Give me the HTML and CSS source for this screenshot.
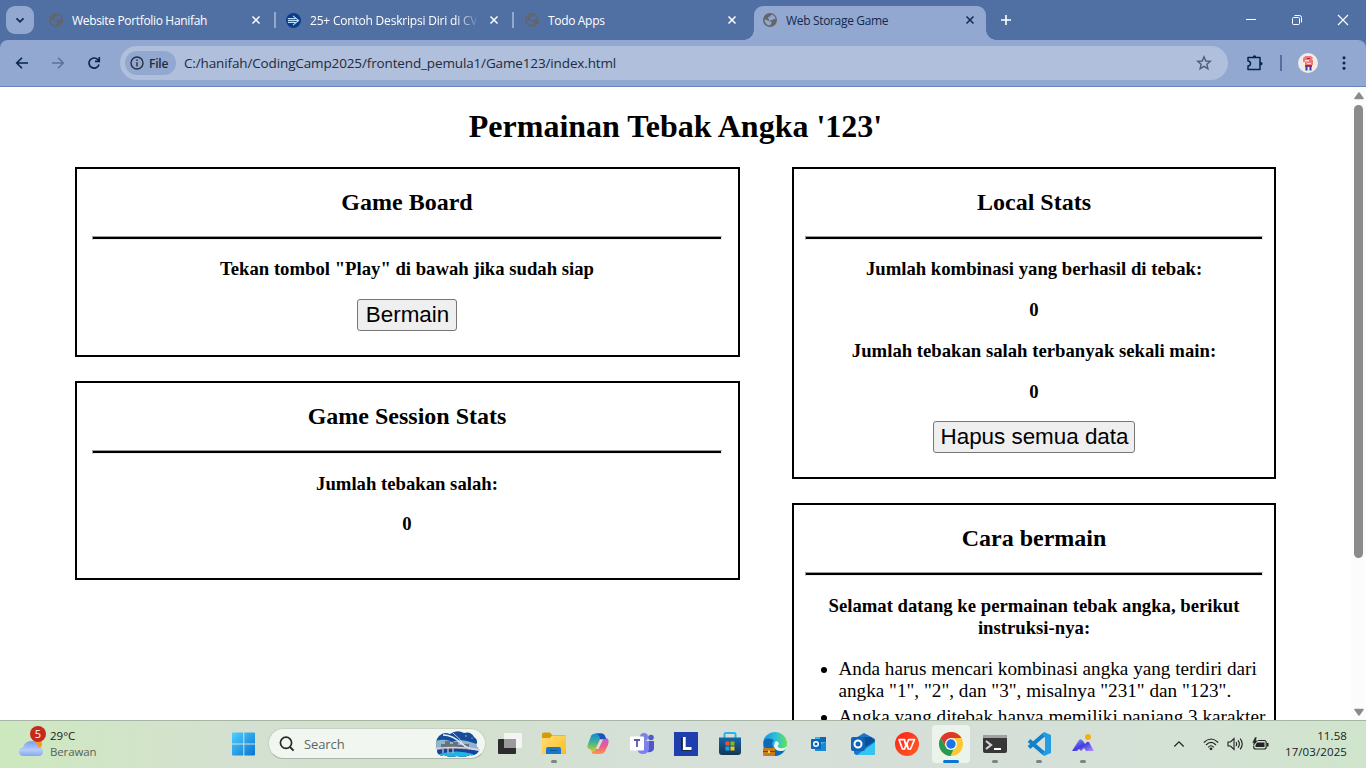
FILE: index.html
```html
<!DOCTYPE html>
<html lang="id">
<head>
<meta charset="utf-8">
<title>Web Storage Game</title>
<link rel="stylesheet" href="styles.css">
</head>
<body>
<svg class="defs" width="0" height="0">
  <defs>
    <symbol id="globe" viewBox="0 0 16 16"><circle cx="8" cy="8" r="8" fill="#626569"/><path d="M9.200 1.800 C12 2 14.300 4.500 14.300 7.400 L12 6.500 L11 8.400 L9.300 7.600 L8.200 9 L6.500 8.400 L7 6.800 L5.200 6.400 L6.600 4.300 L8.600 4 Z M1.700 7.200 L5 8.200 L8 9.800 L10.200 10.100 L9.200 12.200 L8 14.300 C4.600 14.300 1.800 11.400 1.700 7.200 Z" fill="currentColor"/></symbol>
    <symbol id="close" viewBox="0 0 10 10"><path d="M1.500 1.500 L8.500 8.500 M8.500 1.500 L1.500 8.500" stroke="currentColor" stroke-width="1.500"/></symbol>
    <linearGradient id="sky" x1="0" y1="0" x2="1" y2="1"><stop offset="0" stop-color="#50d0ff"/><stop offset="1" stop-color="#0873d2"/></linearGradient>
    <linearGradient id="cloudFill" x1="0" y1="0" x2="0" y2="1"><stop offset="0" stop-color="#7d9cf0"/><stop offset=".6" stop-color="#b4cdfb"/><stop offset="1" stop-color="#83a8ed"/></linearGradient>
    <linearGradient id="folderFill" x1="0" y1="0" x2="1" y2="1"><stop offset="0" stop-color="#ffdf76"/><stop offset="1" stop-color="#fdbb20"/></linearGradient>
    <linearGradient id="copA" x1="0" y1="0" x2="0" y2="1"><stop offset="0" stop-color="#1687dc"/><stop offset=".5" stop-color="#43b78c"/><stop offset="1" stop-color="#f2ca20"/></linearGradient>
    <linearGradient id="copB" x1="0" y1="0" x2="0" y2="1"><stop offset="0" stop-color="#ae61e6"/><stop offset=".5" stop-color="#ef5a8e"/><stop offset="1" stop-color="#ff944a"/></linearGradient>
    <linearGradient id="storeFill" x1="0" y1="0" x2="0" y2="1"><stop offset="0" stop-color="#1768a9"/><stop offset="1" stop-color="#153452"/></linearGradient>
    <linearGradient id="edgeA" x1="0" y1="0" x2="1" y2="0"><stop offset="0" stop-color="#168fda"/><stop offset=".5" stop-color="#29bddc"/><stop offset="1" stop-color="#60e455"/></linearGradient>
    <linearGradient id="wpsFill" x1="0" y1="0" x2="1" y2="1"><stop offset="0" stop-color="#ff1d16"/><stop offset="1" stop-color="#ff6125"/></linearGradient>
    <linearGradient id="codeFill" x1="0" y1="0" x2="1" y2="0"><stop offset="0" stop-color="#086eb5"/><stop offset="1" stop-color="#2ba9ed"/></linearGradient>
    <linearGradient id="peakFill" x1="0" y1="0" x2="1" y2="1"><stop offset="0" stop-color="#9ba4f9"/><stop offset=".5" stop-color="#433be0"/><stop offset="1" stop-color="#b497f8"/></linearGradient>
    <clipPath id="sceneClip"><path d="M4 5 Q9 0 15 3 Q22 -2 29 2 Q36 0 39 6 Q44 9 41 14 L44 19 Q42 25 35 24 Q29 27 22 25 Q14 27 9 24 Q2 26 2 18 Q-1 10 4 5 Z"/></clipPath>
  </defs>
</svg>

<header class="tabstrip">
  <div class="tab-search"><svg width="12" height="12" viewBox="0 0 12 12"><path d="M2.500 4.300 L6 7.800 L9.500 4.300" fill="none" stroke="#13294b" stroke-width="1.800"/></svg></div>
  <nav class="tabs">
    <div class="tab divided"><svg class="favicon"><use href="#globe"/></svg><span class="tab-title">Website Portfolio Hanifah</span><svg class="tab-close"><use href="#close"/></svg></div>
    <div class="tab divided"><svg class="favicon wide" viewBox="0 0 16 16"><circle cx="8" cy="8" r="8" fill="#0b3b8c"/><path d="M2 6 H10 M2 8 H13 M2 10 H10 M7.500 3 L13.500 8 L7.500 13" fill="none" stroke="#b8ddff" stroke-width="1.100"/></svg><span class="tab-title faded">25+ Contoh Deskripsi Diri di CV</span><svg class="tab-close"><use href="#close"/></svg></div>
    <div class="tab"><svg class="favicon"><use href="#globe"/></svg><span class="tab-title">Todo Apps</span><svg class="tab-close"><use href="#close"/></svg></div>
    <div class="tab active"><svg class="favicon"><use href="#globe"/></svg><span class="tab-title">Web Storage Game</span><svg class="tab-close"><use href="#close"/></svg></div>
  </nav>
  <svg class="new-tab" width="12" height="12" viewBox="0 0 12 12"><path d="M6 1 V11 M1 6 H11" stroke="#fff" stroke-width="1.600"/></svg>
  <div class="window-controls">
    <svg width="12" height="12" viewBox="0 0 12 12"><path d="M1 5.500 H11" stroke="#fff"/></svg>
    <svg width="12" height="12" viewBox="0 0 12 12"><rect x="1.500" y="3.500" width="7" height="7" rx="1" fill="none" stroke="#fff"/><path d="M3.500 1.500 H8.500 Q10.500 1.500 10.500 3.500 V8.500" fill="none" stroke="#fff"/></svg>
    <svg width="12" height="12" viewBox="0 0 12 12"><path d="M1 1 L11 11 M11 1 L1 11" stroke="#fff" stroke-width="1.100"/></svg>
  </div>
</header>

<div class="toolbar-wrap">
<div class="toolbar">
  <div class="nav-buttons">
    <svg width="14" height="14" viewBox="0 0 14 14"><path d="M13 7 H2 M7 1.700 L1.700 7 L7 12.300" fill="none" stroke="#05244f" stroke-width="1.600"/></svg>
    <svg width="14" height="14" viewBox="0 0 14 14"><path d="M1 7 H12 M7 1.700 L12.300 7 L7 12.300" fill="none" stroke="#5872a0" stroke-width="1.500"/></svg>
    <svg width="14" height="14" viewBox="0 0 14 14"><path d="M12 8.500 A5.100 5.100 0 1 1 10.800 3.500 L12.300 5 M12.300 1 V5.400 H8" fill="none" stroke="#05244f" stroke-width="1.600"/></svg>
  </div>
  <div class="omnibox">
    <div class="chip"><svg width="14" height="14" viewBox="0 0 14 14"><circle cx="7" cy="7" r="6" fill="none" stroke="#27303e" stroke-width="1.400"/><path d="M7 6.200 V10.400 M7 3.500 V5" stroke="#27303e" stroke-width="1.400"/></svg><span>File</span></div>
    <span class="url">C:/hanifah/CodingCamp2025/frontend_pemula1/Game123/index.html</span>
    <svg class="star" width="16" height="16" viewBox="0 0 16 16"><path d="M8 1.800 L9.800 6 L14.300 6.400 L10.900 9.300 L11.900 13.700 L8 11.400 L4.100 13.700 L5.100 9.300 L1.700 6.400 L6.200 6 Z" fill="none" stroke="#515e74" stroke-width="1.400"/></svg>
  </div>
  <svg class="puzzle" width="18" height="18" viewBox="0 0 18 18"><path d="M2 3.500 H14 V15.500 H2 V12 Q4.500 11.800 4.500 9.500 Q4.500 7.300 2 7 Z" fill="none" stroke="#05244f" stroke-width="1.500" stroke-linejoin="round"/><path d="M6.800 3.500 Q6.800 1.300 8.500 1.300 Q10.200 1.300 10.200 3.500 Z M14 7.800 Q16.600 7.800 16.600 9.600 Q16.600 11.500 14 11.500 Z" fill="#05244f"/></svg>
  <span class="toolbar-divider"></span>
  <svg class="avatar" width="20" height="20" viewBox="0 0 20 20"><circle cx="10" cy="10" r="10" fill="#f0ede5"/><path d="M7.500 3 H13 L15 5 L14 7 H15 V12 H7 V9 H5 V5 Z" fill="#f0787c"/><path d="M9 5 H12 V6 H9 Z" fill="#a0264c"/><path d="M7 7 H11 V8.500 H7 Z M9 10 H13 V11 H9 Z" fill="#fbd9d4"/><path d="M7 12 H14 V14 H7 Z" fill="#b6283b"/><path d="M7.500 13.500 H9.500 V17.500 H7.500 Z M11.500 13.500 H13.500 V17.500 H11.500 Z" fill="#2347b8"/></svg>
  <svg class="more" width="4" height="14" viewBox="0 0 4 14"><g fill="#05244f"><circle cx="2" cy="1.700" r="1.500"/><circle cx="2" cy="7" r="1.500"/><circle cx="2" cy="12.300" r="1.500"/></g></svg>
</div>
</div>

<div class="viewport">
  <main class="page">
    <h1>Permainan Tebak Angka '123'</h1>
    <div class="columns">
      <div class="column main-column">
        <section class="card board">
          <h2>Game Board</h2>
          <hr>
          <h3>Tekan tombol "Play" di bawah jika sudah siap</h3>
          <button class="play">Bermain</button>
        </section>
        <section class="card session">
          <h2>Game Session Stats</h2>
          <hr>
          <h3>Jumlah tebakan salah:</h3>
          <h3>0</h3>
        </section>
      </div>
      <div class="column side-column">
        <section class="card local">
          <h2>Local Stats</h2>
          <hr>
          <h3>Jumlah kombinasi yang berhasil di tebak:</h3>
          <h3>0</h3>
          <h3>Jumlah tebakan salah terbanyak sekali main:</h3>
          <h3>0</h3>
          <button class="clear">Hapus semua data</button>
        </section>
        <section class="card guide">
          <h2>Cara bermain</h2>
          <hr>
          <h3>Selamat datang ke permainan tebak angka, berikut instruksi-nya:</h3>
          <ul>
            <li>Anda harus mencari kombinasi angka yang terdiri dari angka "1", "2", dan "3", misalnya "231" dan "123".</li>
            <li>Angka yang ditebak hanya memiliki panjang 3 karakter</li>
          </ul>
        </section>
      </div>
    </div>
  </main>
  <div class="scrollbar">
    <svg width="10" height="8" viewBox="0 0 10 8"><path d="M5 1 L9 6.500 H1 Z" fill="#8b8b8b" stroke="#8b8b8b" stroke-width="1.500" stroke-linejoin="round"/></svg>
    <div class="thumb"></div>
    <svg class="down" width="10" height="8" viewBox="0 0 10 8"><path d="M5 7 L9 1.500 H1 Z" fill="#8b8b8b" stroke="#8b8b8b" stroke-width="1.500" stroke-linejoin="round"/></svg>
  </div>
</div>

<footer class="taskbar">
  <div class="weather">
    <div class="weather-icon">
      <svg width="26" height="18" viewBox="0 0 26 18"><circle cx="19" cy="5" r="5" fill="#f49a24"/><path d="M6 17 Q1 17 1 12.500 Q1 9 5 8.500 Q7 2 13 2 Q19 2 20 8 Q25 8.500 25 12.500 Q25 17 20 17 Z" fill="url(#cloudFill)"/></svg>
      <span class="badge">5</span>
    </div>
    <div class="weather-text"><span class="temp">29°C</span><span class="cond">Berawan</span></div>
  </div>
  <svg class="start" width="24" height="24" viewBox="0 0 24 24"><path d="M0 1.500 Q0 .5 1 .5 H11.300 V11.400 H0 Z M12.300 .5 H22 Q23 .5 23 1.500 V11.400 H12.300 Z M0 12.400 H11.300 V23.500 H1 Q0 23.500 0 22.500 Z M12.300 12.400 H23 V22.500 Q23 23.500 22 23.500 H12.300 Z" fill="url(#sky)"/></svg>
  <div class="search">
    <svg width="16" height="16" viewBox="0 0 16 16"><circle cx="7" cy="6.800" r="5.600" fill="none" stroke="#292929" stroke-width="1.700"/><path d="M11 11 L14.600 14.700" stroke="#292929" stroke-width="1.900"/></svg>
    <span>Search</span>
    <svg class="scene" width="46" height="26" viewBox="0 0 46 26"><g clip-path="url(#sceneClip)"><rect width="46" height="26" fill="#164b99"/><path d="M0 10 Q11 7 17 11 Q27 6 46 15 V26 H0 Z" fill="#8fb6cf"/><path d="M6 18 V13 H10 V10 H15 V13 H18 V11 H23 V14 H27 V13 H34 V18 Z" fill="#66737c"/><path d="M0 19 Q22 16 46 20 V26 H0 Z" fill="#12439e"/><path d="M4 23 Q22 18 38 23 V26 H4 Z" fill="#20b5e5"/><g fill="#cfe4ff"><circle cx="10" cy="4" r=".7"/><circle cx="31" cy="5" r=".7"/><circle cx="37" cy="7" r=".6"/></g></g><path d="M8 18 V22 M13 17 V22 M18 17 V22" stroke="#b9aeb0" stroke-width="1.500"/><path d="M8 4 Q18 4 27 13 Q33 18 45 19" fill="none" stroke="#e4ecfb" stroke-width="1.500"/><path d="M18 2 Q26 8 30 16" fill="none" stroke="#e4ecfb" stroke-width=".8"/><path d="M0 17.500 Q25 15 45 19" fill="none" stroke="#dfd0dc" stroke-width="1.400"/></svg>
  </div>
  <div class="apps">
    <div class="app"><svg viewBox="0 0 24 24"><rect x="6" y="1" width="18" height="15" rx="1" fill="#f4f4f4"/><rect y="7" width="18" height="15" rx="1" fill="#2c2c2c"/><path d="M6 7 H18 V16 H6 Z" fill="#9b9b9b"/></svg></div>
    <div class="app running"><svg viewBox="0 0 24 24"><path d="M0 2 Q0 .5 2 .5 H8 L10 3 H22 Q24 3 24 5 V10 H0 Z" fill="#d99a08"/><path d="M0 6 H8 L10 3.500 H24 V22 H0 Z" fill="url(#folderFill)"/><path d="M4 22 V17 Q4 15 6 15 H17 Q19 15 19 17 V22 Z" fill="#1478cc"/><path d="M8 18.500 H15" stroke="#0c559c"/></svg></div>
    <div class="app"><svg viewBox="0 0 24 24"><path d="M10 1.500 H16 Q18 1.500 19 4 L20 7 H16 Q14 7 13 10 L10 19 Q9 22 6 20 L4 17 Q0 17 2 12 L5 4 Q6 1.500 10 1.500 Z" fill="url(#copA)"/><path d="M14 22 H8 Q6 22 5.500 20 Q9 20 10 17 L13 8 Q14 5 17 6 H20 Q24 7 22 13 L19 19 Q18 22 14 22 Z" fill="url(#copB)"/><path d="M14 7.500 H17 L12.500 17 H9.500 Z" fill="#d6e0d3"/><path d="M10 1.500 H16 Q18 1.500 19 4 L20 7 H14 Q14 3 10 1.500 Z" fill="#1755bc"/></svg></div>
    <div class="app"><svg viewBox="0 0 24 24"><circle cx="14" cy="5" r="4" fill="#7b83eb"/><circle cx="21" cy="5.500" r="2.800" fill="#5059c9"/><path d="M17 9 H24 V17 Q22 21 17 20 Z" fill="#4e56c9"/><path d="M7 9 H19 V17 Q18 22 13 22 Q8 22 7 17 Z" fill="#7b83eb"/><rect y="4.500" width="14" height="14" rx="1" fill="#fff"/><path d="M4 8 H10 M7 8 V15" stroke="#5558af" stroke-width="1.800"/></svg></div>
    <div class="app"><svg viewBox="0 0 24 24"><path d="M0 0 H24 V24 H0 Z" fill="#1e3fad"/><path d="M8 19 L10.500 17 H18 L17 19 Z M7 6 L9.500 5 V17 L7 19 Z" fill="#12263c"/><path d="M10.300 5 V16.500 H17.500" fill="none" stroke="#fff" stroke-width="2.800"/></svg></div>
    <div class="app"><svg viewBox="0 0 24 24"><path d="M6.500 6 V2 Q6.500 1 8 1 H16 Q17.500 1 17.500 2 V6" fill="none" stroke="#27b7ef" stroke-width="2"/><path d="M1 5.500 H23 V20 Q23 23 20 23 H4 Q1 23 1 20 Z" fill="url(#storeFill)"/><path d="M7.500 9.500 H11.500 V13.500 H7.500 Z" fill="#ee5425"/><path d="M12.500 9.500 H16.500 V13.500 H12.500 Z" fill="#82bd20"/><path d="M7.500 14.500 H11.500 V18.500 H7.500 Z" fill="#15a4ec"/><path d="M12.500 14.500 H16.500 V18.500 H12.500 Z" fill="#ffc117"/></svg></div>
    <div class="app"><svg viewBox="0 0 24 24"><circle cx="12" cy="12" r="12" fill="url(#edgeA)"/><path d="M1 8 Q5 5 11 8 Q8 11 10 15 Q13 20 22 18 Q18 24 11 24 Q0 22 1 8 Z" fill="#0e67b7"/><path d="M12 10 Q15 8 16 12 Q13 15 17 16 Q21 17 24 14 Q23 19 18 19 Q12 19 11 14 Z" fill="#eaf4ee"/><rect y="16" width="12" height="8" rx="1" fill="#c77c17"/><path d="M0 19.500 H12" stroke="#7e430c"/><rect x="5" y="18.500" width="2" height="2.500" fill="#ffd152"/></svg></div>
    <div class="app"><svg viewBox="0 0 24 24"><path d="M8 5 H19 V19 H8 Z" fill="#31b8ee"/><path d="M13 5 H19 V10 H13 Z" fill="#1267af"/><path d="M8 15 L19 10 V19 H8 Z" fill="#1689d8"/><rect x="4" y="7" width="10" height="10" rx="1" fill="#0b66b8"/><circle cx="9" cy="12" r="2.300" fill="none" stroke="#fff" stroke-width="1.500"/></svg></div>
    <div class="app"><svg viewBox="0 0 24 24"><path d="M3 7 L13 1 L24 7 V21 Q24 23 22 23 H6 Q3 23 3 20 Z" fill="#1976cb"/><path d="M12 5 H20 L24 9 L13 16 Z" fill="#0b4f97"/><path d="M6 23 L24 10 V21 Q24 23 22 23 Z" fill="#32c5f2"/><rect y="5" width="14" height="14" rx="2" fill="#0f64b6"/><circle cx="7" cy="12" r="3.500" fill="none" stroke="#fff" stroke-width="2"/></svg></div>
    <div class="app"><svg viewBox="0 0 24 24"><circle cx="12" cy="12" r="12" fill="url(#wpsFill)"/><path d="M4 7.700 H9.500 L11 14.500 L13.500 7.700 H19.500 L15.500 17 H13.200 L11.800 11 L9.500 17 H7.500 Z" fill="none" stroke="#fff" stroke-width="1.700" stroke-linejoin="round"/></svg></div>
    <div class="app running current"><svg viewBox="0 0 24 24"><circle cx="12" cy="12" r="12" fill="#fcc934"/><path d="M1.600 6 A12 12 0 0 1 22.400 6 H12 L7 15 Z" fill="#db392d"/><path d="M1.600 6 L6.800 15 Q9 18 14.500 17 L11.500 24 A12 12 0 0 1 1.600 6 Z" fill="#259a50"/><circle cx="12" cy="12" r="6" fill="#fff"/><circle cx="12" cy="12" r="4.700" fill="#1d74e8"/></svg></div>
    <div class="app running"><svg viewBox="0 0 24 24"><path d="M0 5 Q0 3 2 3 H22 Q24 3 24 5 V19 Q24 21 22 21 H2 Q0 21 0 19 Z" fill="#373737"/><path d="M0 5 Q0 3 2 3 H22 Q24 3 24 5 V6 H0 Z" fill="#a1a1a1"/><path d="M3 9 L8 13 L3 17" fill="none" stroke="#d5d5d5" stroke-width="2.200"/><path d="M11 17 H18" stroke="#fff" stroke-width="2"/></svg></div>
    <div class="app running"><svg viewBox="0 0 24 24"><path d="M2 15.500 L17 2.500 M2 8.500 L17 21.500" stroke="#1381c9" stroke-width="4"/><path d="M17 0 L24 3 V21 L17 24 L15 22 L18 18 V6 L15 2 Z" fill="#229ce4"/></svg></div>
    <div class="app running"><svg viewBox="0 0 24 24"><circle cx="17" cy="5" r="3" fill="#f6ae18"/><path d="M1 19 L8 8 Q10 6 12 9 L14 12 L16 10 Q18 9 19 12 L23 19 H15 L13 16 L10 19 L8 17 L6 19 Z" fill="url(#peakFill)"/></svg></div>
  </div>
  <div class="tray">
    <svg class="chevron" width="12" height="8" viewBox="0 0 12 8"><path d="M1.300 6.500 L6 1.800 L10.700 6.500" fill="none" stroke="#222" stroke-width="1.200"/></svg>
    <svg width="16" height="14" viewBox="0 0 16 14"><g fill="none" stroke="#222" stroke-width="1.100"><path d="M.8 5.500 Q8 -1.500 15.200 5.500 M3 8 Q8 2.800 13 8 M5.200 10.300 Q8 7.200 10.800 10.300"/></g><circle cx="8" cy="11.800" r="1.400" fill="#222"/></svg>
    <svg width="17" height="14" viewBox="0 0 17 14"><path d="M1 5 H3.500 L7 1.500 V12.500 L3.500 9 H1 Z M9 5 Q10.300 7 9 9 M11 3.300 Q13.800 7 11 10.700 M13.200 1.700 Q17.300 7 13.200 12.300" fill="none" stroke="#222" stroke-width="1.100"/></svg>
    <svg width="17" height="14" viewBox="0 0 17 14"><rect x="1.700" y="3.500" width="12.500" height="8.500" rx="2" fill="none" stroke="#222" stroke-width="1.100"/><path d="M5 5.500 H12.500 V10 H3.500 V8 Z M15 6 H16.500 V9.500 H15 Z" fill="#222"/><path d="M3 0 L0 6 H2 L1.500 9 L6 3.500 H4 L5 0 Z" fill="#222" stroke="#d6e1d6" stroke-width=".5"/></svg>
  </div>
  <div class="clock"><span class="time">11.58</span><span class="date">17/03/2025</span></div>
</footer>
</body>
</html>
```
FILE: styles.css
```css
* { box-sizing: border-box; }
html, body { height: 100%; overflow: hidden; }
body {
  margin: 0;
  display: flex;
  flex-direction: column;
  background: #fff;
  font-family: "Open Sans", "Noto Sans", sans-serif;
}
svg { flex: none; display: block; }
.defs { position: absolute; }

/* Browser tabs */
.tabstrip {
  height: 40px;
  flex: none;
  display: flex;
  align-items: center;
  padding-left: 6px;
  background: #5070a4;
}
.tab-search {
  width: 28px;
  height: 28px;
  margin-right: 6px;
  display: grid;
  place-items: center;
  border-radius: 9px;
  background: #92a8d1;
}
.tabs { display: flex; gap: 6px; align-self: flex-end; }
.tab {
  position: relative;
  width: 232px;
  height: 34px;
  padding: 0 11px 6px 9px;
  display: flex;
  align-items: center;
  color: #fff;
  font-size: 12px;
}
.tab.divided::after {
  content: "";
  position: absolute;
  right: -4px;
  top: 6px;
  width: 2px;
  height: 16px;
  background: #92a8d1;
}
.favicon { width: 14px; height: 14px; color: #5070a4; }
.favicon.wide { width: 15px; height: 15px; margin: 0 0 0 -1px; }
.tab-title {
  width: 170px;
  margin: 0 13px 0 9px;
  overflow: hidden;
  white-space: nowrap;
  letter-spacing: -0.33px;
}
.faded { letter-spacing: -0.2px; -webkit-mask-image: linear-gradient(90deg, #000 145px, transparent 170px); }
.tab-close { width: 10px; height: 10px; }
.tab.active {
  border-radius: 9px 9px 0 0;
  background: #92a8d1;
  color: #14294c;
}
.active .favicon { color: #92a8d1; }
.tab.active::before, .tab.active::after {
  content: "";
  position: absolute;
  bottom: 0;
  width: 10px;
  height: 10px;
}
.tab.active::before { left: -10px; background: radial-gradient(circle at 0 0, transparent 9.500px, #92a8d1 10px); }
.tab.active::after { right: -10px; background: radial-gradient(circle at 100% 0, transparent 9.500px, #92a8d1 10px); }
.new-tab { margin-left: 14px; }
.window-controls { display: flex; gap: 34px; margin: 0 17px 0 auto; }

/* Address bar */
.toolbar-wrap { flex: none; height: 47px; background: #5070a4; }
.toolbar {
  height: 47px;
  display: flex;
  align-items: center;
  padding: 0 20px 0 15px;
  border-radius: 8px 8px 0 0;
  border-bottom: 1px solid #6985bc;
  background: #92a8d1;
}
.nav-buttons { display: flex; gap: 22px; margin-right: 19px; }
.omnibox {
  width: 1108px;
  height: 34px;
  padding: 0 16px 0 5px;
  display: flex;
  align-items: center;
  border-radius: 17px;
  background: #afbfdc;
  color: #202b3d;
}
.chip {
  width: 51px;
  height: 24px;
  padding-left: 5px;
  display: flex;
  align-items: center;
  gap: 5px;
  border-radius: 12px;
  background: #92a8d1;
  font-size: 12px;
  font-weight: 600;
  letter-spacing: -0.2px;
}
.url { margin-left: 8px; font-size: 13.500px; letter-spacing: -0.135px; white-space: nowrap; }
.star { margin-left: auto; }
.puzzle { margin-left: 18px; }
.toolbar-divider { width: 2px; height: 16px; margin: 0 16px; background: #5070a4; }
.more { margin-left: 24px; }

/* Game page */
.viewport { height: 633px; flex: none; display: flex; overflow: hidden; background: #fff; }
.page {
  width: 1351px;
  padding: 21px 75px 0;
  color: #000;
  font-family: "Liberation Serif", "Times New Roman", serif;
}
h1, h2, h3, hr, ul { margin: 0; padding: 0; }
h1 { font-size: 32px; line-height: 36px; margin-bottom: 23px; text-align: center; }
.columns { display: flex; gap: 52px; align-items: flex-start; }
.column { display: flex; flex-direction: column; gap: 24px; }
.main-column { width: 665px; }
.side-column { width: 484px; }
.card {
  display: flex;
  flex-direction: column;
  align-items: center;
  padding: 19px 16px 0 15px;
  border: 2px solid #000;
  text-align: center;
}
.side-column .card { padding: 19px 11px 0; }
.board { height: 190px; }
.session { height: 199px; }
.local { height: 312px; }
.guide { height: 400px; }
h2 { font-size: 24px; line-height: 28px; }
hr {
  align-self: stretch;
  height: 4px;
  margin: 20px 0 18px;
  border: 1px solid #9a9a9a;
  border-right-color: #eee;
  border-bottom-color: #eee;
  background: #000;
}
.session hr, .guide hr { margin-bottom: 19px; }
h3 { font-size: 18.720px; line-height: 22px; margin-bottom: 19px; }
.session h3 { margin-bottom: 18px; }
.local h3:nth-of-type(4) { margin-bottom: 18px; }
button {
  height: 32px;
  padding: 0 0 0 1px;
  border: 1px solid #767676;
  border-radius: 3px;
  background: #efefef;
  color: #000;
  font: 22.400px/28px "Liberation Sans", Arial, sans-serif;
  white-space: nowrap;
}
.play { width: 100px; }
.clear { width: 202px; }
ul { align-self: stretch; padding-left: 33.500px; text-align: left; font-size: 19.200px; line-height: 22px; }
.guide ul { margin-right: -12px; }
li { margin-bottom: 4px; }

.scrollbar {
  width: 15px;
  padding: 5px 0 4px;
  display: flex;
  flex-direction: column;
  align-items: center;
  background: #fcfcfc;
}
.thumb { width: 9px; height: 453px; margin-top: 5px; border-radius: 5px; background: #8b8b8b; }
.down { margin-top: auto; }

/* Desktop taskbar */
.taskbar {
  height: 48px;
  flex: none;
  display: flex;
  align-items: center;
  padding-bottom: 2px;
  border-top: 1px solid #a7b5a5;
  background: linear-gradient(90deg, #cde8bf 0, #d1e5c7 110px, #d4e0d1 250px, #d2e1cc 400px, #d5e0d7 650px, #d5dfd8 1000px, #d4e2d5 1200px, #cfe5cb 100%);
}
.weather { width: 232px; padding-left: 18px; display: flex; align-items: center; }
.weather-icon { position: relative; width: 32px; height: 32px; display: flex; align-items: center; padding-top: 9px; }
.badge {
  position: absolute;
  left: 12px;
  top: -2px;
  width: 16px;
  height: 16px;
  border-radius: 50%;
  background: #c42b1c;
  color: #fff;
  font-size: 11px;
  line-height: 16px;
  text-align: center;
}
.weather-text, .clock { display: flex; flex-direction: column; font-size: 11.500px; line-height: 16px; }
.weather-text { color: #202020; }
.cond { color: #596158; letter-spacing: -0.15px; }
.start { margin-right: 13px; }
.search {
  width: 218px;
  height: 31px;
  margin: 0 5px 0 -1px;
  padding: 0 4px 0 10px;
  display: flex;
  align-items: center;
  border: 1px solid #c5d2c3;
  border-bottom-color: #a9b6a7;
  border-radius: 16px;
  background: #f1f6f0;
  color: #606660;
  font-size: 13px;
}
.search span { margin-left: 9px; letter-spacing: -0.1px; }
.scene { margin-left: auto; }
.apps { display: flex; gap: 6.100px; }
.app {
  position: relative;
  width: 38px;
  height: 38px;
  display: grid;
  place-items: center;
  border-radius: 4px;
}
.app:last-child { margin-left: 0; }
.app svg { width: 24px; height: 24px; }
.running::after {
  content: "";
  position: absolute;
  left: 16px;
  bottom: 0;
  width: 6px;
  height: 3px;
  border-radius: 2px;
  background: #7d857d;
}
.current { background: #ecf2ec; }
.current::after { left: 11px; width: 16px; background: #0875d1; }
.tray { display: flex; align-items: center; gap: 8px; margin-left: auto; }
.chevron { margin-right: 10px; }
.clock { width: 78px; margin-right: 19px; color: #202020; text-align: right; white-space: nowrap; }
.clock span { letter-spacing: 0.1px; }
```
